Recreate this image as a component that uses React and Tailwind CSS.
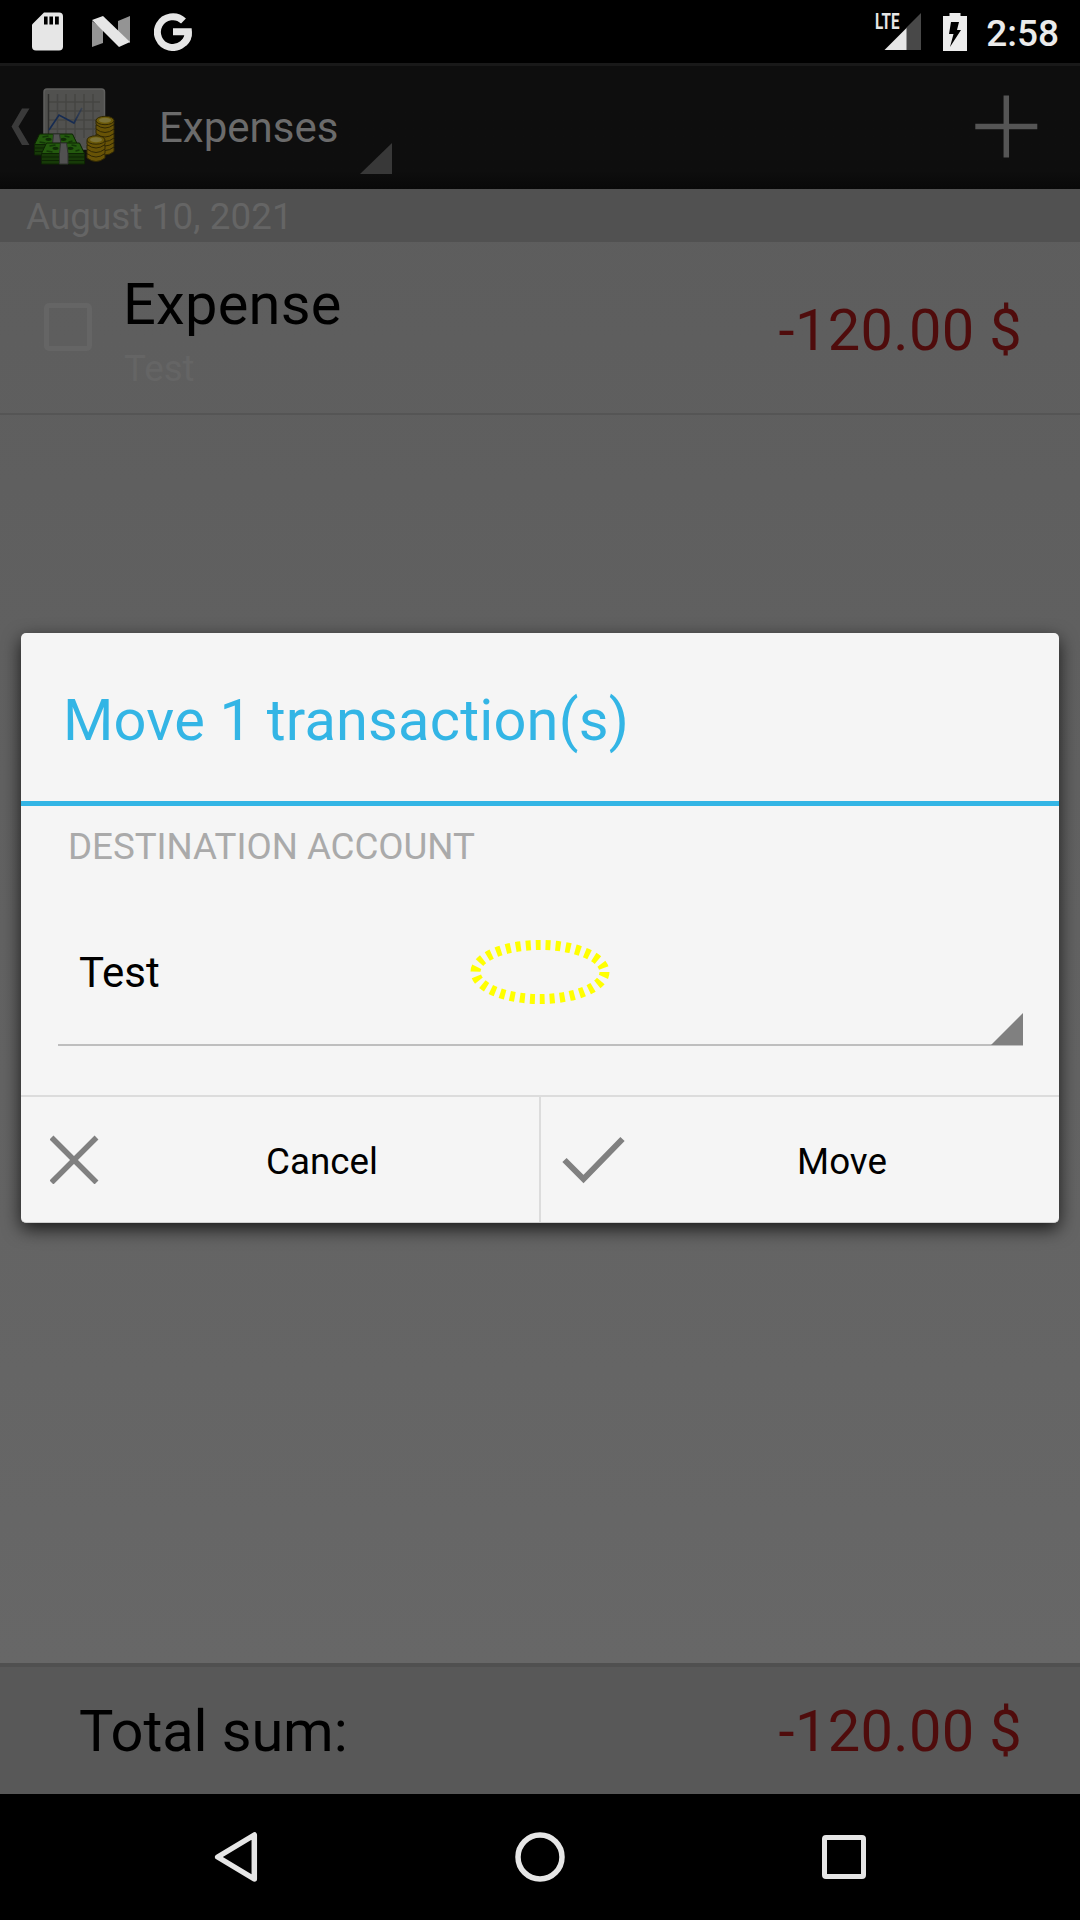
import React from "react";

function StatusBar() {
  return (
    <div className="flex h-[63px] items-center bg-black pl-8 pr-[21px]">
      <svg width="31" height="39" viewBox="0 0 31 39" fill="#e6e6e6">
        <path d="M12 0.500H27a4 4 0 0 1 4 4V34.500a4 4 0 0 1-4 4H4a4 4 0 0 1-4-4V12.500Z" />
        <path fill="#000" d="M12 4.500h3.600v8H12zM17.400 4.500H21v8h-3.600zM23 4.500h3.800v8H23z" />
      </svg>
      <svg className="ml-[28.5px]" width="38" height="32" viewBox="0 0 38 32">
        <path fill="#949494" d="M0 5L11 13V27L0 31ZM26 5L38 0V27L26 17Z" />
        <path fill="#e6e6e6" d="M0 4L11 0L38 26L27 31Z" />
      </svg>
      <svg className="ml-[24.5px]" width="39" height="38" viewBox="0 0 39 38" fill="none" stroke="#e6e6e6" strokeWidth="7">
        <path d="M29.500 8A15.400 15.400 0 1 0 34.200 18.600" />
        <path d="M19 18.700H34.400Q35 26 29.500 30.500" />
      </svg>
      <svg className="ml-auto" width="48" height="44" viewBox="-1 -3 48 44">
        <path fill="#484848" d="M31 15L46 0V37H31Z" />
        <path fill="#e6e6e6" d="M9.500 37L31.500 15V37Z" />
        <text x="0" y="15.500" fill="#e6e6e6" fontFamily="Roboto" fontWeight="700" fontSize="22" textLength="24.500" lengthAdjust="spacingAndGlyphs">LTE</text>
      </svg>
      <svg className="ml-[21px]" width="24" height="38" viewBox="0 0 24 38">
        <path fill="#ededed" d="M6.500 0H17.500V3H24V38H0V3H6.500Z" />
        <path fill="#000" d="M8 9H16L14 17H18L7 34L10.500 21H6Z" />
      </svg>
      <span className="ml-[19px] pt-[3px] text-[37px] font-medium leading-none text-[#ebebeb]">2:58</span>
    </div>
  );
}

const COLUMN_TALL = [31, 26.5, 22, 17.5, 13, 8.5, 4];
const COLUMN_SHORT = [18, 13.5, 9, 4.5];

function CoinStack({ x, top, steps }) {
  return (
    <g transform={`translate(${x} ${top})`} stroke="#302804" strokeWidth="1">
      {steps.map((y) => (
        <path key={y} fill="#685306" d={`M0 ${y}V${y + 4}Q9 ${y + 11} 18 ${y + 4}V${y}Z`} />
      ))}
      <ellipse cx="9" cy="4" rx="9" ry="4.200" fill="#6b5909" />
      <ellipse cx="9" cy="3.800" rx="6" ry="2.500" fill="#7b7237" stroke="none" />
    </g>
  );
}

function Bills({ x, y }) {
  return (
    <g transform={`translate(${x} ${y})`}>
      <path fill="#173a08" stroke="#0c2303" d="M0 10.500H43V21H0Z" />
      <path stroke="#0c2303" d="M0 14H43M0 17.500H43" />
      <path fill="#245a0e" stroke="#0c2303" d="M5 0H38L43 10.500H0Z" />
      <path stroke="#123607" strokeWidth="1.500" fill="none" d="M8 3l6-1M5 8l6 1M30 2l5 1M34 8l4-1" />
      <ellipse cx="14" cy="5.300" rx="3" ry="1.600" fill="#102c07" />
      <ellipse cx="29" cy="5.300" rx="3" ry="1.600" fill="#102c07" />
      <path fill="#515151" stroke="#303030" d="M19 0H25L26.500 10.500V21H18V10.500Z" />
    </g>
  );
}

function AppIcon() {
  return (
    <svg width="82" height="80" viewBox="0 0 82 80" fill="none">
      <defs>
        <linearGradient id="trend" x1="15" y1="0" x2="49" y2="0" gradientUnits="userSpaceOnUse">
          <stop offset="0.7" stopColor="#162b51" />
          <stop offset="1" stopColor="#162b51" stopOpacity="0.3" />
        </linearGradient>
      </defs>
      <rect x="10" y="1" width="60.500" height="60" rx="3" fill="#51514f" stroke="#5f5f5e" strokeWidth="1.500" />
      <path stroke="#454543" strokeWidth="1.500" d="M23.500 6V50M32 6V50M41 6V50M50 6V50M59 6V50M15 14H66M15 23H66M15 32H66M15 41H66" />
      <path stroke="#30302f" strokeWidth="1.500" d="M14.500 6V50" />
      <path stroke="url(#trend)" strokeWidth="1.700" d="M15 42L25 27L40 35L48 20" />
      <CoinStack x={62} top={28.5} steps={COLUMN_TALL} />
      <Bills x={0.5} y={46} />
      <Bills x={7.5} y={55} />
      <CoinStack x={53} top={48} steps={COLUMN_SHORT} />
    </svg>
  );
}

function ActionBar() {
  return (
    <div className="flex h-[126px] items-center border-t-[3px] border-[#191919] bg-linear-to-b from-[#0e0e0e] from-85% to-[#090909] pl-[11px] pr-[42px]">
      <svg className="-mt-[1px]" width="19" height="38" viewBox="0 0 19 38" fill="#3a3a3a">
        <path d="M11 0.500H18.500L7.500 18.500L18.500 37H11L0.500 18.500Z" />
      </svg>
      <div className="ml-1 pt-px">
        <AppIcon />
      </div>
      <span className="ml-[43px] text-[42px] leading-[50px] text-[#6b6b6b]">Expenses</span>
      <svg className="ml-[22px] mt-[61px]" width="32" height="31" viewBox="0 0 32 31">
        <path fill="#383838" d="M0 31L32 0V31Z" />
      </svg>
      <svg className="ml-auto -mt-[3px]" width="63" height="63" viewBox="0 0 63 63">
        <path stroke="#555" strokeWidth="5.500" d="M31.300 0.500V62.500M0.300 31.500H62.300" />
      </svg>
    </div>
  );
}

function TransactionRow() {
  return (
    <div className="flex h-[173px] items-start border-b-2 border-[#555] pl-[44px] pr-[58px]">
      <div className="mt-[61px] size-[48px] rounded-[5px] border-[5px] border-[#656565]" />
      <div className="ml-[31px] flex flex-1 flex-col gap-[8px] pt-[28px]">
        <span className="text-[57.75px] leading-[68px] tracking-[0.25px] text-black">Expense</span>
        <span className="pl-px pt-px text-[36.75px] leading-[44px] text-[#656565]">Test</span>
      </div>
      <span className="mt-[54px] text-[57.75px] leading-[68px] tracking-[0.35px] text-[#4f0c0c]">-120.00 $</span>
    </div>
  );
}

function MoveDialog() {
  return (
    <div className="absolute left-[21px] top-[633px] flex h-[590px] w-[1038px] flex-col rounded-[5px] border-b border-[#cfcfcf] bg-[#f5f5f5] shadow-[0_6px_18px_rgba(0,0,0,0.75)]">
      <div className="flex h-[173px] items-center border-b-[5px] border-[#33b5e5] pl-[42px] pt-[6px] text-[57.75px] tracking-[0.2px] text-[#33b5e5]">
        Move 1 transaction(s)
      </div>
      <div className="flex h-[80px] items-center pl-[47px] pt-[2px] text-[36.75px] tracking-[-0.05px] text-[#aaa]">DESTINATION ACCOUNT</div>
      <div className="relative ml-[37px] mr-[36px] flex h-[160px] items-center border-b-2 border-[#bebebe] pl-[21px] pt-[14px] text-[42px] text-black">
        Test
        <svg className="absolute -bottom-px right-0" width="32" height="32" viewBox="0 0 32 32">
          <path fill="#808080" d="M0 32L32 0V32Z" />
        </svg>
        <svg className="absolute left-[411px] top-[53px]" width="142" height="66" viewBox="0 0 142 66" fill="none">
          <ellipse cx="71" cy="33" rx="64.500" ry="27" stroke="#ff0" strokeWidth="10" strokeDasharray="5 5" />
        </svg>
      </div>
      <div className="mt-[49px] flex flex-1 border-t-2 border-[#dcdcdc] text-[36.75px] text-black">
        <button className="flex w-[518px] items-center pl-[29px]">
          <svg width="49" height="49" viewBox="0 0 49 49">
            <path stroke="#808080" strokeWidth="5.500" d="M1.500 2.500L46.500 47.500M46.500 2.500L1.500 47.500" />
          </svg>
          <span className="flex-1 pl-[6px] pt-[4px] text-center">Cancel</span>
        </button>
        <button className="flex flex-1 items-center border-l-2 border-[#dcdcdc] pl-[21px]">
          <svg width="63" height="49" viewBox="0 0 63 49" fill="none">
            <path stroke="#808080" strokeWidth="6" d="M2.500 25L21.500 44L60.500 4" />
          </svg>
          <span className="flex-1 pt-[4px] text-center">Move</span>
        </button>
      </div>
    </div>
  );
}

function NavBar() {
  return (
    <div className="flex h-[126px] items-center bg-black pl-[214px] pr-[214px]">
      <svg width="44" height="52" viewBox="0 0 44 52" fill="none" stroke="#e6e6e6" strokeWidth="5.500" strokeLinejoin="round">
        <path d="M40.300 4V48L3.700 26Z" />
      </svg>
      <svg className="ml-[256px]" width="52" height="52" viewBox="0 0 52 52" fill="none" stroke="#e6e6e6" strokeWidth="5.500">
        <circle cx="26" cy="26" r="22" />
      </svg>
      <div className="ml-auto size-[44px] rounded-[4px] border-5 border-[#e6e6e6]" />
    </div>
  );
}

export default function App() {
  return (
    <div className="relative flex h-[1920px] w-[1080px] flex-col overflow-hidden bg-black font-['Roboto',sans-serif]">
      <StatusBar />
      <ActionBar />
      <div className="flex flex-1 flex-col bg-linear-to-b from-[#5d5d5d] to-[#676767]">
        <div className="flex h-[53px] items-center bg-[#515151] pl-[26px] pt-[2px] text-[36.75px] tracking-[0.1px] text-[#656565]">August 10, 2021</div>
        <TransactionRow />
      </div>
      <div className="flex h-[131px] items-center justify-between border-t-4 border-[#505050] bg-[#585858] pl-[79px] pr-[58px] pt-[2px] text-[57.75px]">
        <span className="tracking-[-0.1px] text-black">Total sum:</span>
        <span className="tracking-[0.35px] text-[#4f0c0c]">-120.00 $</span>
      </div>
      <NavBar />
      <MoveDialog />
    </div>
  );
}
